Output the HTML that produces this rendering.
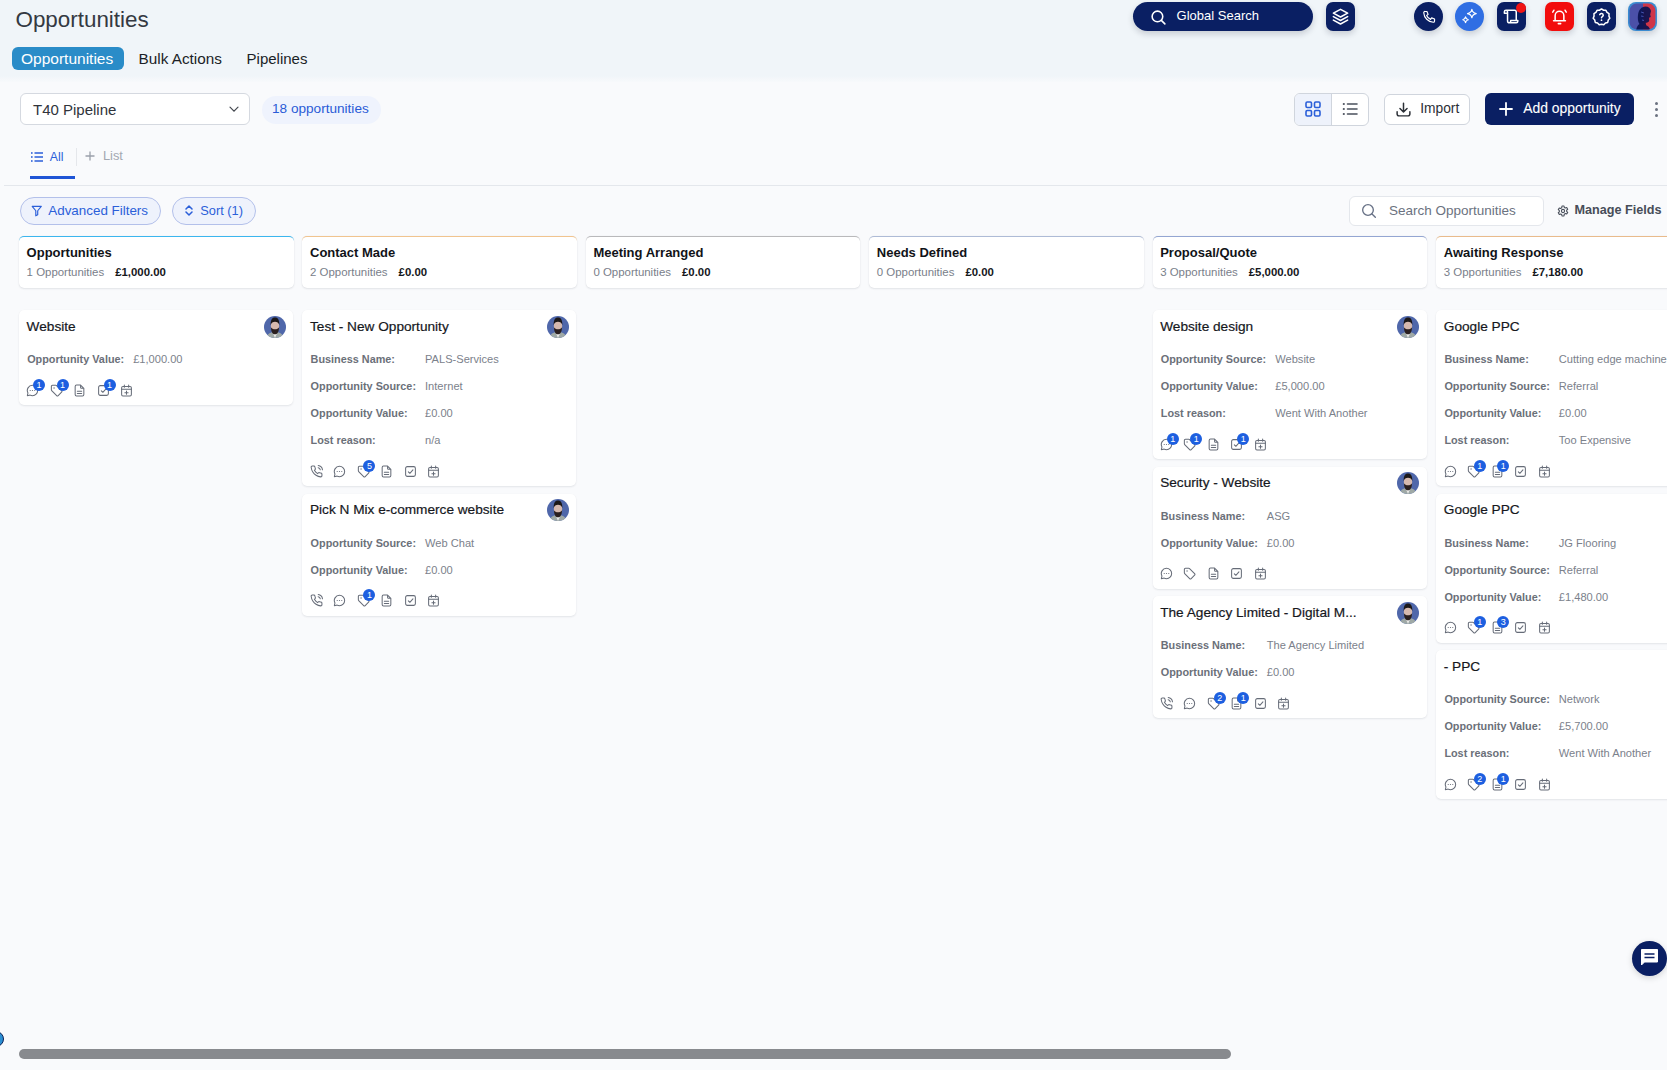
<!DOCTYPE html><html><head><meta charset="utf-8"><title>Opportunities</title><style>
*{box-sizing:border-box;margin:0;padding:0}
html,body{width:1667px;height:1070px;overflow:hidden}
body{background:#f9fafc;font-family:"Liberation Sans", sans-serif;position:relative}
.t{position:absolute;white-space:nowrap}
.abs{position:absolute}
.hdr{position:absolute;left:0;top:0;width:1667px;height:82px;background:linear-gradient(#f0f5f9 0,#f0f5f9 76px,#f9fafc 83px)}
.nav{background:#0a1f63}
.sh{box-shadow:0 3px 6px rgba(15,23,42,.18)}
.colh{position:absolute;top:236px;width:274.5px;height:52px;background:#fff;border-radius:5px;border-top:1.5px solid #38bdf8;box-shadow:0 1px 2px rgba(16,24,40,.09),0 0 1px rgba(16,24,40,.10)}
.card{position:absolute;width:273px;background:#fff;border-radius:5px;box-shadow:0 1px 2px rgba(16,24,40,.09),0 0 1px rgba(16,24,40,.04)}
.ic{position:absolute;width:13px;height:13px;color:#666c78}
.bd{position:absolute;width:12px;height:12px;border-radius:50%;background:#1d5fe0;color:#fff;font-size:9px;line-height:12px;text-align:center}
</style></head><body>
<svg width="0" height="0" style="position:absolute">
<defs>
<symbol id="i-phone" viewBox="0 0 24 24"><path fill="none" stroke="currentColor" stroke-width="1.9" stroke-linecap="round" stroke-linejoin="round" d="M15.05 5A5 5 0 0 1 19 8.95M15.05 1A9 9 0 0 1 23 8.94m-1 7.98v3a2 2 0 0 1-2.18 2 19.79 19.79 0 0 1-8.63-3.07 19.5 19.5 0 0 1-6-6 19.79 19.79 0 0 1-3.07-8.67A2 2 0 0 1 4.11 2h3a2 2 0 0 1 2 1.72 12.84 12.84 0 0 0 .7 2.81 2 2 0 0 1-.45 2.11L8.09 9.91a16 16 0 0 0 6 6l1.27-1.27a2 2 0 0 1 2.11-.45 12.84 12.84 0 0 0 2.81.7A2 2 0 0 1 22 16.92z"/></symbol>
<symbol id="i-chat" viewBox="0 0 24 24"><path fill="none" stroke="currentColor" stroke-width="1.9" stroke-linecap="round" stroke-linejoin="round" d="M12 2.5a9.5 9.5 0 0 1 0 19 9.4 9.4 0 0 1-4.3-1L2.5 21.5l1.1-4.9A9.5 9.5 0 0 1 12 2.5z"/><circle cx="7.8" cy="12" r="1.1" fill="currentColor"/><circle cx="12" cy="12" r="1.1" fill="currentColor"/><circle cx="16.2" cy="12" r="1.1" fill="currentColor"/></symbol>
<symbol id="i-tag" viewBox="0 0 24 24"><path fill="none" stroke="currentColor" stroke-width="1.9" stroke-linecap="round" stroke-linejoin="round" d="M2.5 4.5a2 2 0 0 1 2-2h6.2a2 2 0 0 1 1.4.6l9.3 9.3a2 2 0 0 1 0 2.8l-6.3 6.3a2 2 0 0 1-2.8 0L3.1 12.1a2 2 0 0 1-.6-1.4z"/><circle cx="7.5" cy="7.5" r="1.3" fill="currentColor"/></symbol>
<symbol id="i-doc" viewBox="0 0 24 24"><path fill="none" stroke="currentColor" stroke-width="1.9" stroke-linecap="round" stroke-linejoin="round" d="M14 2H6.5a2.5 2.5 0 0 0-2.5 2.5v15A2.5 2.5 0 0 0 6.5 22h11a2.5 2.5 0 0 0 2.5-2.5V8zM14 2v4.5A1.5 1.5 0 0 0 15.5 8H20M8 13.5h8M8 17.5h8"/></symbol>
<symbol id="i-check" viewBox="0 0 24 24"><rect x="3" y="3" width="18" height="18" rx="3" fill="none" stroke="currentColor" stroke-width="1.9"/><path fill="none" stroke="currentColor" stroke-width="1.9" stroke-linecap="round" stroke-linejoin="round" d="M8 12.5l2.8 2.8L16.5 9"/></symbol>
<symbol id="i-cal" viewBox="0 0 24 24"><rect x="3" y="4.5" width="18" height="17.5" rx="2.5" fill="none" stroke="currentColor" stroke-width="1.9"/><path fill="none" stroke="currentColor" stroke-width="1.9" stroke-linecap="round" d="M8 2v4M16 2v4M3 9.5h18M12 13v6M9 16h6"/></symbol>
<symbol id="i-avatar" viewBox="0 0 22 22"><clipPath id="avcl"><circle cx="11" cy="11" r="11"/></clipPath><g clip-path="url(#avcl)"><rect width="22" height="22" fill="#4f67aa"/><path d="M2.5 22c.8-3.5 2.5-5.2 5.5-5.8h6c3 .6 4.7 2.3 5.5 5.8z" fill="#9fa9a6"/><path d="M8.6 16.2h4.8L11 22z" fill="#ecebea"/><ellipse cx="11" cy="10" rx="4.2" ry="5.6" fill="#d6b9ae"/><path d="M6.6 9C6.6 3.2 8.6 1.6 11 1.6s4.4 1.6 4.4 7.4c-.8-2.2-2.3-3.2-4.4-3.2S7.4 6.8 6.6 9z" fill="#1c1818"/><path d="M6.9 11.2c.2 5.2 2 7 4.1 7s3.9-1.8 4.1-7c-.9 1.4-2.3 2-4.1 2s-3.2-.6-4.1-2z" fill="#2a1f1f"/></g></symbol>
</defs>
</svg>
<div class="hdr"></div>
<div class="t" id="h1" style="left:15.5px;top:9.24px;font-size:22.4px;line-height:22.4px;color:#343942;font-weight:400;">Opportunities</div>
<div class="abs" style="left:12px;top:47px;width:112px;height:23px;border-radius:6px;background:#2a8cc8"></div>
<div class="t" id="tab1" style="left:21px;top:50.58px;font-size:15.5px;line-height:15.5px;color:#ffffff;font-weight:400;">Opportunities</div>
<div class="t" id="tab2" style="left:138.6px;top:50.85px;font-size:15.3px;line-height:15.3px;color:#1b1f27;font-weight:400;">Bulk Actions</div>
<div class="t" id="tab3" style="left:246.6px;top:51.10px;font-size:15.0px;line-height:15.0px;color:#1b1f27;font-weight:400;">Pipelines</div>
<div class="abs nav sh" style="left:1133px;top:2px;width:180px;height:29px;border-radius:15px"></div>
<svg class="abs" style="left:1150px;top:8.5px" width="17" height="17" viewBox="0 0 24 24"><circle cx="10.5" cy="10.5" r="7.5" fill="none" stroke="#fff" stroke-width="2.2"/><path d="M16 16l5 5" stroke="#fff" stroke-width="2.2" stroke-linecap="round"/></svg>
<div class="t" id="gs" style="left:1176.6px;top:9.30px;font-size:13px;line-height:13px;color:#ffffff;font-weight:400;">Global Search</div>
<div class="abs nav sh" style="left:1326px;top:2px;width:29px;height:29px;border-radius:7px"></div>
<svg class="abs" style="left:1331px;top:7px" width="19" height="19" viewBox="0 0 24 24"><path fill="none" stroke="#fff" stroke-width="2" stroke-linejoin="round" d="M12 3l9 4.8-9 4.8-9-4.8z"/><path fill="none" stroke="#fff" stroke-width="2" stroke-linejoin="round" stroke-linecap="round" d="M3 12.2l9 4.8 9-4.8M3 16.6l9 4.8 9-4.8"/></svg>
<div class="abs nav sh" style="left:1414px;top:2px;width:29px;height:29px;border-radius:50%"></div>
<svg class="abs" style="left:1421.5px;top:9.5px" width="14" height="14" viewBox="0 0 24 24"><path fill="none" stroke="#fff" stroke-width="2" stroke-linejoin="round" d="M5 2.5h3.5l2 5-2.5 1.8a12 12 0 0 0 6.7 6.7l1.8-2.5 5 2v3.5a2 2 0 0 1-2.2 2A17.5 17.5 0 0 1 3 4.7a2 2 0 0 1 2-2.2z"/></svg>
<div class="abs sh" style="left:1455px;top:2px;width:29px;height:29px;border-radius:50%;background:#2f6ee3"></div>
<svg class="abs" style="left:1460px;top:7px" width="19" height="19" viewBox="0 0 24 24"><path fill="none" stroke="#fff" stroke-width="1.5" stroke-linejoin="round" d="M15 3c.6 3.2 2 4.6 5.5 5.3-3.5.7-4.9 2.1-5.5 5.3-.6-3.2-2-4.6-5.5-5.3 3.5-.7 4.9-2.1 5.5-5.3zM7 12.5c.4 2.2 1.3 3.1 3.5 3.6-2.2.5-3.1 1.4-3.5 3.6-.4-2.2-1.3-3.1-3.5-3.6 2.2-.5 3.1-1.4 3.5-3.6z"/></svg>
<div class="abs nav sh" style="left:1497px;top:2px;width:29px;height:29px;border-radius:7px"></div>
<svg class="abs" style="left:1502px;top:7px" width="19" height="19" viewBox="0 0 24 24"><path fill="none" stroke="#fff" stroke-width="1.9" stroke-linejoin="round" stroke-linecap="round" d="M8 20h10a2 2 0 0 0 2-2v-1h-9v1a2 2 0 0 1-4 0V6a2 2 0 0 0-2-2 2 2 0 0 0-2 2v2h4M5 4h11a2 2 0 0 1 2 2v11"/></svg>
<div class="abs" style="left:1515.7px;top:2.7px;width:10px;height:10px;border-radius:50%;background:#f01414"></div>
<div class="abs sh" style="left:1545px;top:2px;width:29px;height:29px;border-radius:7px;background:#f20d0d"></div>
<svg class="abs" style="left:1550px;top:7px" width="19" height="19" viewBox="0 0 24 24"><path fill="none" stroke="#fff" stroke-width="1.9" stroke-linejoin="round" stroke-linecap="round" d="M6.5 17V11a5.5 5.5 0 0 1 11 0v6M4.5 17.5h15M10.5 21h3M3.5 6.5L5 4M20.5 6.5L19 4"/></svg>
<div class="abs nav sh" style="left:1587px;top:2px;width:29px;height:29px;border-radius:7px"></div>
<svg class="abs" style="left:1592px;top:7px" width="19" height="19" viewBox="0 0 24 24"><path fill="none" stroke="#fff" stroke-width="1.9" stroke-linejoin="round" d="M12 2.5l2.6 1.6 3 .1 1.4 2.7 2.5 1.6-.1 3 1.1 2.8-2 2.2-.6 3-2.9.8-2.1 2.2-2.9-.8-2.9.8-2.1-2.2-2.9-.8-.6-3-2-2.2 1.1-2.8-.1-3 2.5-1.6L6.4 4.2l3-.1z"/><path fill="none" stroke="#fff" stroke-width="1.9" stroke-linecap="round" d="M9.8 9.6a2.3 2.3 0 0 1 4.4.8c0 1.5-2.2 1.9-2.2 3.2"/><circle cx="12" cy="16.6" r="1.1" fill="#fff"/></svg>
<div class="abs sh" style="left:1628px;top:2px;width:29px;height:29px;border-radius:8px;overflow:hidden;background:#3b8bd0">
<svg width="29" height="29" viewBox="0 0 29 29" style="position:absolute;left:0;top:0"><defs><clipPath id="avc"><rect x="1.6" y="1.6" width="25.8" height="25.8" rx="7"/></clipPath></defs><g clip-path="url(#avc)"><rect x="0" y="0" width="15" height="29" fill="#4b50a8"/><rect x="15" y="0" width="14" height="29" fill="#cf3548"/><path d="M8 29c.5-4 2-6 3.5-7-1.5-2-2-5-1.5-9 .6-5 3.5-8.5 7.5-8.5 3 0 5 2 5.5 4.5l-.8 3.5.6 2.5-1.8.8.2 3c-.5 1.5-2 2-3.5 2l.5 2.5c2 .8 3.5 2.3 4.5 5.7z" fill="#0a1250" opacity=".92"/><path d="M13 10l3 1M13 14l2.5.5M14 18l2 .5" stroke="#5a6ad0" stroke-width="1" opacity=".7"/></g></svg></div>
<div class="abs" style="left:20px;top:93px;width:230px;height:32px;background:#fff;border:1px solid #d5d9e0;border-radius:6px"></div>
<div class="t" id="sel" style="left:33px;top:101.80px;font-size:15px;line-height:15px;color:#30343b;font-weight:400;">T40 Pipeline</div>
<svg class="abs" style="left:228.5px;top:104px" width="10" height="10" viewBox="0 0 10 10"><path d="M1 3.2l4 4 4-4" fill="none" stroke="#44484f" stroke-width="1.2" stroke-linecap="round" stroke-linejoin="miter"/></svg>
<div class="abs" style="left:261.5px;top:95.5px;width:119.5px;height:28px;background:#eff3fd;border-radius:14px"></div>
<div class="t" id="badge" style="left:272px;top:102.29px;font-size:13.6px;line-height:13.6px;color:#2a5bd7;font-weight:400;">18 opportunities</div>
<div class="abs" style="left:1294px;top:92.5px;width:75px;height:33px;background:#fff;border:1px solid #d0d5dd;border-radius:6px;overflow:hidden"><div style="position:absolute;left:0;top:0;width:37px;height:31px;background:#eef2fb;border-right:1px solid #d0d5dd"></div></div>
<svg class="abs" style="left:1305px;top:101px" width="16" height="16" viewBox="0 0 16 16"><g fill="none" stroke="#2b5fd9" stroke-width="1.6"><rect x="1" y="1" width="5.5" height="5.5" rx="1.2"/><rect x="9.5" y="1" width="5.5" height="5.5" rx="1.2"/><rect x="1" y="9.5" width="5.5" height="5.5" rx="1.2"/><rect x="9.5" y="9.5" width="5.5" height="5.5" rx="1.2"/></g></svg>
<svg class="abs" style="left:1342px;top:101px" width="16" height="16" viewBox="0 0 16 16"><g stroke="#4a505c" stroke-width="1.6" stroke-linecap="round"><path d="M5.5 3h9.5M5.5 8h9.5M5.5 13h9.5"/></g><g fill="#4a505c"><circle cx="1.8" cy="3" r="1.1"/><circle cx="1.8" cy="8" r="1.1"/><circle cx="1.8" cy="13" r="1.1"/></g></svg>
<div class="abs" style="left:1384px;top:93.5px;width:86px;height:31px;background:#fff;border:1px solid #d0d5dd;border-radius:6px"></div>
<svg class="abs" style="left:1394.5px;top:100.5px" width="17" height="17" viewBox="0 0 24 24"><path fill="none" stroke="#2b2f36" stroke-width="2.1" stroke-linecap="round" stroke-linejoin="round" d="M3 15v3.5A2.5 2.5 0 0 0 5.5 21h13a2.5 2.5 0 0 0 2.5-2.5V15M12 3v12M7 10.5l5 5 5-5"/></svg>
<div class="t" id="imp" style="left:1420.2px;top:101.82px;font-size:13.8px;line-height:13.8px;color:#2b2f36;font-weight:400;">Import</div>
<div class="abs nav" style="left:1485px;top:93px;width:149px;height:31.5px;border-radius:6px"></div>
<svg class="abs" style="left:1499px;top:102px" width="14" height="14" viewBox="0 0 14 14"><path d="M7 1v12M1 7h12" stroke="#fff" stroke-width="1.8" stroke-linecap="round"/></svg>
<div class="t" id="add" style="left:1523.3px;top:101.53px;font-size:13.9px;line-height:13.9px;color:#ffffff;font-weight:400;-webkit-text-stroke:0.1px #fff">Add opportunity</div>
<div class="abs" style="left:1655px;top:101.5px;width:3px;height:3px;border-radius:50%;background:#6b7280"></div><div class="abs" style="left:1655px;top:107.5px;width:3px;height:3px;border-radius:50%;background:#6b7280"></div><div class="abs" style="left:1655px;top:113.5px;width:3px;height:3px;border-radius:50%;background:#6b7280"></div>
<svg class="abs" style="left:31px;top:151.5px" width="12" height="10" viewBox="0 0 12 10"><g fill="#2b5fd9"><rect x="0" y="0.2" width="1.6" height="1.6"/><rect x="0" y="4.2" width="1.6" height="1.6"/><rect x="0" y="8.2" width="1.6" height="1.6"/></g><g stroke="#2b5fd9" stroke-width="1.4"><path d="M3.5 1h8.5M3.5 5h8.5M3.5 9h8.5"/></g></svg>
<div class="t" id="all" style="left:49.8px;top:150.89px;font-size:12.3px;line-height:12.3px;color:#2b5fd9;font-weight:400;">All</div>
<div class="abs" style="left:76px;top:148px;width:1px;height:18px;background:#e5e7eb"></div>
<svg class="abs" style="left:85px;top:151px" width="10" height="10" viewBox="0 0 10 10"><path d="M5 0.5v9M0.5 5h9" stroke="#9aa0aa" stroke-width="1.3"/></svg>
<div class="t" id="list" style="left:103px;top:150.46px;font-size:12.8px;line-height:12.8px;color:#a3a8b1;font-weight:400;">List</div>
<div class="abs" style="left:30px;top:176px;width:45px;height:3px;background:#1f55d6"></div>
<div class="abs" style="left:4px;top:185px;width:1663px;height:1px;background:#e4e7ec"></div>
<div class="abs" style="left:20px;top:197px;width:141px;height:28px;border:1px solid #b3c0ea;border-radius:14px;background:#eef2fc"></div>
<svg class="abs" style="left:31px;top:205px" width="11.5" height="11.5" viewBox="0 0 24 24"><path fill="none" stroke="#2b5fd9" stroke-width="2.4" stroke-linejoin="round" d="M2.5 3h19l-7.5 9v8.5l-4 2V12z"/></svg>
<div class="t" id="af" style="left:48.3px;top:204.36px;font-size:13.4px;line-height:13.4px;color:#2b5fd9;font-weight:400;">Advanced Filters</div>
<div class="abs" style="left:172px;top:197px;width:84px;height:28px;border:1px solid #b3c0ea;border-radius:14px;background:#eef2fc"></div>
<svg class="abs" style="left:184.5px;top:205px" width="8" height="11" viewBox="0 0 8 11"><path d="M1 4l3-3 3 3M1 7l3 3 3-3" fill="none" stroke="#2b5fd9" stroke-width="1.5" stroke-linecap="round" stroke-linejoin="round"/></svg>
<div class="t" id="sort" style="left:200.3px;top:204.86px;font-size:12.8px;line-height:12.8px;color:#2b5fd9;font-weight:400;">Sort (1)</div>
<div class="abs" style="left:1349px;top:196px;width:195px;height:30px;background:#fff;border:1px solid #e4e7ec;border-radius:6px"></div>
<svg class="abs" style="left:1361px;top:203px" width="16" height="16" viewBox="0 0 24 24"><circle cx="10.5" cy="10.5" r="8" fill="none" stroke="#667085" stroke-width="2"/><path d="M16.5 16.5l5 5" stroke="#667085" stroke-width="2" stroke-linecap="round"/></svg>
<div class="t" id="so" style="left:1389px;top:203.57px;font-size:13.5px;line-height:13.5px;color:#6b7280;font-weight:400;">Search Opportunities</div>
<svg class="abs" style="left:1556.5px;top:204.5px" width="12" height="12" viewBox="0 0 24 24"><path fill="none" stroke="#4a505c" stroke-width="2.2" stroke-linejoin="round" d="M10 2h4l.6 2.8 2.1 1.2 2.7-.9 2 3.4-2.1 1.9v2.4l2.1 1.9-2 3.4-2.7-.9-2.1 1.2L14 22h-4l-.6-2.8-2.1-1.2-2.7.9-2-3.4 2.1-1.9V11.2L2.6 9.3l2-3.4 2.7.9 2.1-1.2z"/><circle cx="12" cy="12" r="3.2" fill="none" stroke="#4a505c" stroke-width="2.2"/></svg>
<div class="t" id="mf" style="left:1574.4px;top:204.29px;font-size:12.65px;line-height:12.65px;color:#474d58;font-weight:700;">Manage Fields</div>
<div class="colh" style="left:19px;border-top-color:#3cb6ee"></div>
<div class="t" id="ch0" style="left:26.6px;top:245.80px;font-size:13px;line-height:13px;color:#111318;font-weight:700;">Opportunities</div>
<div class="t" style="left:26.6px;top:266.71px;font-size:11.45px;line-height:11.45px;color:#7a808a"><span id="cs0">1 Opportunities</span><span style="margin-left:11px;color:#15171c;font-weight:700;font-size:11.4px">£1,000.00</span></div>
<div class="colh" style="left:302.4px;border-top-color:#f1c48f"></div>
<div class="t" id="ch1" style="left:310.0px;top:245.80px;font-size:13px;line-height:13px;color:#111318;font-weight:700;">Contact Made</div>
<div class="t" style="left:310.0px;top:266.71px;font-size:11.45px;line-height:11.45px;color:#7a808a"><span id="cs1">2 Opportunities</span><span style="margin-left:11px;color:#15171c;font-weight:700;font-size:11.4px">£0.00</span></div>
<div class="colh" style="left:585.8px;border-top-color:#b9b9bb"></div>
<div class="t" id="ch2" style="left:593.4px;top:245.80px;font-size:13px;line-height:13px;color:#111318;font-weight:700;">Meeting Arranged</div>
<div class="t" style="left:593.4px;top:266.71px;font-size:11.45px;line-height:11.45px;color:#7a808a"><span id="cs2">0 Opportunities</span><span style="margin-left:11px;color:#15171c;font-weight:700;font-size:11.4px">£0.00</span></div>
<div class="colh" style="left:869.2px;border-top-color:#aebbd6"></div>
<div class="t" id="ch3" style="left:876.8000000000001px;top:245.80px;font-size:13px;line-height:13px;color:#111318;font-weight:700;">Needs Defined</div>
<div class="t" style="left:876.8000000000001px;top:266.71px;font-size:11.45px;line-height:11.45px;color:#7a808a"><span id="cs3">0 Opportunities</span><span style="margin-left:11px;color:#15171c;font-weight:700;font-size:11.4px">£0.00</span></div>
<div class="colh" style="left:1152.6px;border-top-color:#94a6d2"></div>
<div class="t" id="ch4" style="left:1160.1999999999998px;top:245.80px;font-size:13px;line-height:13px;color:#111318;font-weight:700;">Proposal/Quote</div>
<div class="t" style="left:1160.1999999999998px;top:266.71px;font-size:11.45px;line-height:11.45px;color:#7a808a"><span id="cs4">3 Opportunities</span><span style="margin-left:11px;color:#15171c;font-weight:700;font-size:11.4px">£5,000.00</span></div>
<div class="colh" style="left:1436.2px;border-top-color:#e9bb8c"></div>
<div class="t" id="ch5" style="left:1443.8px;top:245.80px;font-size:13px;line-height:13px;color:#111318;font-weight:700;">Awaiting Response</div>
<div class="t" style="left:1443.8px;top:266.71px;font-size:11.45px;line-height:11.45px;color:#7a808a"><span id="cs5">3 Opportunities</span><span style="margin-left:11px;color:#15171c;font-weight:700;font-size:11.4px">£7,180.00</span></div>
<div class="card" style="left:19px;top:310px;width:274px;height:95px"><div class="t" id="cta" style="left:7.6px;top:9.95px;font-size:13.65px;line-height:13.65px;color:#16181d;font-weight:400;-webkit-text-stroke:0.2px #16181d">Website</div><svg class="abs" style="left:244.5px;top:5.8px" width="22" height="22"><use href="#i-avatar"/></svg><div class="abs" style="left:8.2px;top:36.42px;display:grid;grid-template-columns:auto auto;column-gap:9px;row-gap:0"><div style="font-size:10.85px;font-weight:700;color:#6b7079;height:27px;line-height:27px;white-space:nowrap">Opportunity Value:</div><div style="font-size:11.1px;color:#7b818b;height:27px;line-height:27px;white-space:nowrap">£1,000.00</div></div><svg class="ic" style="left:7.40px;top:73.50px"><use href="#i-chat"/></svg><div class="bd" style="left:14.10px;top:68.80px">1</div><svg class="ic" style="left:30.90px;top:73.50px"><use href="#i-tag"/></svg><div class="bd" style="left:37.60px;top:68.80px">1</div><svg class="ic" style="left:54.40px;top:73.50px"><use href="#i-doc"/></svg><svg class="ic" style="left:77.90px;top:73.50px"><use href="#i-check"/></svg><div class="bd" style="left:84.60px;top:68.80px">1</div><svg class="ic" style="left:101.40px;top:73.50px"><use href="#i-cal"/></svg></div>
<div class="card" style="left:302.4px;top:310px;width:274px;height:176px"><div class="t" id="ctb" style="left:7.6px;top:9.95px;font-size:13.65px;line-height:13.65px;color:#16181d;font-weight:400;-webkit-text-stroke:0.2px #16181d">Test - New Opportunity</div><svg class="abs" style="left:244.5px;top:5.8px" width="22" height="22"><use href="#i-avatar"/></svg><div class="abs" style="left:8.2px;top:36.42px;display:grid;grid-template-columns:auto auto;column-gap:9px;row-gap:0"><div style="font-size:10.85px;font-weight:700;color:#6b7079;height:27px;line-height:27px;white-space:nowrap">Business Name:</div><div style="font-size:11.1px;color:#7b818b;height:27px;line-height:27px;white-space:nowrap">PALS-Services</div><div style="font-size:10.85px;font-weight:700;color:#6b7079;height:27px;line-height:27px;white-space:nowrap">Opportunity Source:</div><div style="font-size:11.1px;color:#7b818b;height:27px;line-height:27px;white-space:nowrap">Internet</div><div style="font-size:10.85px;font-weight:700;color:#6b7079;height:27px;line-height:27px;white-space:nowrap">Opportunity Value:</div><div style="font-size:11.1px;color:#7b818b;height:27px;line-height:27px;white-space:nowrap">£0.00</div><div style="font-size:10.85px;font-weight:700;color:#6b7079;height:27px;line-height:27px;white-space:nowrap">Lost reason:</div><div style="font-size:11.1px;color:#7b818b;height:27px;line-height:27px;white-space:nowrap">n/a</div></div><svg class="ic" style="left:7.40px;top:154.50px"><use href="#i-phone"/></svg><svg class="ic" style="left:30.90px;top:154.50px"><use href="#i-chat"/></svg><svg class="ic" style="left:54.40px;top:154.50px"><use href="#i-tag"/></svg><div class="bd" style="left:61.10px;top:149.80px">5</div><svg class="ic" style="left:77.90px;top:154.50px"><use href="#i-doc"/></svg><svg class="ic" style="left:101.40px;top:154.50px"><use href="#i-check"/></svg><svg class="ic" style="left:124.90px;top:154.50px"><use href="#i-cal"/></svg></div>
<div class="card" style="left:302.4px;top:493.5px;width:274px;height:122px"><div class="t" id="ctc" style="left:7.6px;top:9.95px;font-size:13.65px;line-height:13.65px;color:#16181d;font-weight:400;-webkit-text-stroke:0.2px #16181d">Pick N Mix e-commerce website</div><svg class="abs" style="left:244.5px;top:5.8px" width="22" height="22"><use href="#i-avatar"/></svg><div class="abs" style="left:8.2px;top:36.42px;display:grid;grid-template-columns:auto auto;column-gap:9px;row-gap:0"><div style="font-size:10.85px;font-weight:700;color:#6b7079;height:27px;line-height:27px;white-space:nowrap">Opportunity Source:</div><div style="font-size:11.1px;color:#7b818b;height:27px;line-height:27px;white-space:nowrap">Web Chat</div><div style="font-size:10.85px;font-weight:700;color:#6b7079;height:27px;line-height:27px;white-space:nowrap">Opportunity Value:</div><div style="font-size:11.1px;color:#7b818b;height:27px;line-height:27px;white-space:nowrap">£0.00</div></div><svg class="ic" style="left:7.40px;top:100.50px"><use href="#i-phone"/></svg><svg class="ic" style="left:30.90px;top:100.50px"><use href="#i-chat"/></svg><svg class="ic" style="left:54.40px;top:100.50px"><use href="#i-tag"/></svg><div class="bd" style="left:61.10px;top:95.80px">1</div><svg class="ic" style="left:77.90px;top:100.50px"><use href="#i-doc"/></svg><svg class="ic" style="left:101.40px;top:100.50px"><use href="#i-check"/></svg><svg class="ic" style="left:124.90px;top:100.50px"><use href="#i-cal"/></svg></div>
<div class="card" style="left:1152.6px;top:310px;width:274px;height:149px"><div class="t" id="ctd" style="left:7.6px;top:9.95px;font-size:13.65px;line-height:13.65px;color:#16181d;font-weight:400;-webkit-text-stroke:0.2px #16181d">Website design</div><svg class="abs" style="left:244.5px;top:5.8px" width="22" height="22"><use href="#i-avatar"/></svg><div class="abs" style="left:8.2px;top:36.42px;display:grid;grid-template-columns:auto auto;column-gap:9px;row-gap:0"><div style="font-size:10.85px;font-weight:700;color:#6b7079;height:27px;line-height:27px;white-space:nowrap">Opportunity Source:</div><div style="font-size:11.1px;color:#7b818b;height:27px;line-height:27px;white-space:nowrap">Website</div><div style="font-size:10.85px;font-weight:700;color:#6b7079;height:27px;line-height:27px;white-space:nowrap">Opportunity Value:</div><div style="font-size:11.1px;color:#7b818b;height:27px;line-height:27px;white-space:nowrap">£5,000.00</div><div style="font-size:10.85px;font-weight:700;color:#6b7079;height:27px;line-height:27px;white-space:nowrap">Lost reason:</div><div style="font-size:11.1px;color:#7b818b;height:27px;line-height:27px;white-space:nowrap">Went With Another</div></div><svg class="ic" style="left:7.40px;top:127.50px"><use href="#i-chat"/></svg><div class="bd" style="left:14.10px;top:122.80px">1</div><svg class="ic" style="left:30.90px;top:127.50px"><use href="#i-tag"/></svg><div class="bd" style="left:37.60px;top:122.80px">1</div><svg class="ic" style="left:54.40px;top:127.50px"><use href="#i-doc"/></svg><svg class="ic" style="left:77.90px;top:127.50px"><use href="#i-check"/></svg><div class="bd" style="left:84.60px;top:122.80px">1</div><svg class="ic" style="left:101.40px;top:127.50px"><use href="#i-cal"/></svg></div>
<div class="card" style="left:1152.6px;top:466.5px;width:274px;height:122px"><div class="t" id="cte" style="left:7.6px;top:9.95px;font-size:13.65px;line-height:13.65px;color:#16181d;font-weight:400;-webkit-text-stroke:0.2px #16181d">Security - Website</div><svg class="abs" style="left:244.5px;top:5.8px" width="22" height="22"><use href="#i-avatar"/></svg><div class="abs" style="left:8.2px;top:36.42px;display:grid;grid-template-columns:auto auto;column-gap:9px;row-gap:0"><div style="font-size:10.85px;font-weight:700;color:#6b7079;height:27px;line-height:27px;white-space:nowrap">Business Name:</div><div style="font-size:11.1px;color:#7b818b;height:27px;line-height:27px;white-space:nowrap">ASG</div><div style="font-size:10.85px;font-weight:700;color:#6b7079;height:27px;line-height:27px;white-space:nowrap">Opportunity Value:</div><div style="font-size:11.1px;color:#7b818b;height:27px;line-height:27px;white-space:nowrap">£0.00</div></div><svg class="ic" style="left:7.40px;top:100.50px"><use href="#i-chat"/></svg><svg class="ic" style="left:30.90px;top:100.50px"><use href="#i-tag"/></svg><svg class="ic" style="left:54.40px;top:100.50px"><use href="#i-doc"/></svg><svg class="ic" style="left:77.90px;top:100.50px"><use href="#i-check"/></svg><svg class="ic" style="left:101.40px;top:100.50px"><use href="#i-cal"/></svg></div>
<div class="card" style="left:1152.6px;top:596px;width:274px;height:122px"><div class="t" id="ctf" style="left:7.6px;top:9.95px;font-size:13.65px;line-height:13.65px;color:#16181d;font-weight:400;-webkit-text-stroke:0.2px #16181d">The Agency Limited - Digital M...</div><svg class="abs" style="left:244.5px;top:5.8px" width="22" height="22"><use href="#i-avatar"/></svg><div class="abs" style="left:8.2px;top:36.42px;display:grid;grid-template-columns:auto auto;column-gap:9px;row-gap:0"><div style="font-size:10.85px;font-weight:700;color:#6b7079;height:27px;line-height:27px;white-space:nowrap">Business Name:</div><div style="font-size:11.1px;color:#7b818b;height:27px;line-height:27px;white-space:nowrap">The Agency Limited</div><div style="font-size:10.85px;font-weight:700;color:#6b7079;height:27px;line-height:27px;white-space:nowrap">Opportunity Value:</div><div style="font-size:11.1px;color:#7b818b;height:27px;line-height:27px;white-space:nowrap">£0.00</div></div><svg class="ic" style="left:7.40px;top:100.50px"><use href="#i-phone"/></svg><svg class="ic" style="left:30.90px;top:100.50px"><use href="#i-chat"/></svg><svg class="ic" style="left:54.40px;top:100.50px"><use href="#i-tag"/></svg><div class="bd" style="left:61.10px;top:95.80px">2</div><svg class="ic" style="left:77.90px;top:100.50px"><use href="#i-doc"/></svg><div class="bd" style="left:84.60px;top:95.80px">1</div><svg class="ic" style="left:101.40px;top:100.50px"><use href="#i-check"/></svg><svg class="ic" style="left:124.90px;top:100.50px"><use href="#i-cal"/></svg></div>
<div class="card" style="left:1436.2px;top:310px;width:274px;height:176px"><div class="t" id="ctg" style="left:7.6px;top:9.95px;font-size:13.65px;line-height:13.65px;color:#16181d;font-weight:400;-webkit-text-stroke:0.2px #16181d">Google PPC</div><svg class="abs" style="left:244.5px;top:5.8px" width="22" height="22"><use href="#i-avatar"/></svg><div class="abs" style="left:8.2px;top:36.42px;display:grid;grid-template-columns:auto auto;column-gap:9px;row-gap:0"><div style="font-size:10.85px;font-weight:700;color:#6b7079;height:27px;line-height:27px;white-space:nowrap">Business Name:</div><div style="font-size:11.1px;color:#7b818b;height:27px;line-height:27px;white-space:nowrap">Cutting edge machinery</div><div style="font-size:10.85px;font-weight:700;color:#6b7079;height:27px;line-height:27px;white-space:nowrap">Opportunity Source:</div><div style="font-size:11.1px;color:#7b818b;height:27px;line-height:27px;white-space:nowrap">Referral</div><div style="font-size:10.85px;font-weight:700;color:#6b7079;height:27px;line-height:27px;white-space:nowrap">Opportunity Value:</div><div style="font-size:11.1px;color:#7b818b;height:27px;line-height:27px;white-space:nowrap">£0.00</div><div style="font-size:10.85px;font-weight:700;color:#6b7079;height:27px;line-height:27px;white-space:nowrap">Lost reason:</div><div style="font-size:11.1px;color:#7b818b;height:27px;line-height:27px;white-space:nowrap">Too Expensive</div></div><svg class="ic" style="left:7.40px;top:154.50px"><use href="#i-chat"/></svg><svg class="ic" style="left:30.90px;top:154.50px"><use href="#i-tag"/></svg><div class="bd" style="left:37.60px;top:149.80px">1</div><svg class="ic" style="left:54.40px;top:154.50px"><use href="#i-doc"/></svg><div class="bd" style="left:61.10px;top:149.80px">1</div><svg class="ic" style="left:77.90px;top:154.50px"><use href="#i-check"/></svg><svg class="ic" style="left:101.40px;top:154.50px"><use href="#i-cal"/></svg></div>
<div class="card" style="left:1436.2px;top:493.5px;width:274px;height:149px"><div class="t" id="cth" style="left:7.6px;top:9.95px;font-size:13.65px;line-height:13.65px;color:#16181d;font-weight:400;-webkit-text-stroke:0.2px #16181d">Google PPC</div><svg class="abs" style="left:244.5px;top:5.8px" width="22" height="22"><use href="#i-avatar"/></svg><div class="abs" style="left:8.2px;top:36.42px;display:grid;grid-template-columns:auto auto;column-gap:9px;row-gap:0"><div style="font-size:10.85px;font-weight:700;color:#6b7079;height:27px;line-height:27px;white-space:nowrap">Business Name:</div><div style="font-size:11.1px;color:#7b818b;height:27px;line-height:27px;white-space:nowrap">JG Flooring</div><div style="font-size:10.85px;font-weight:700;color:#6b7079;height:27px;line-height:27px;white-space:nowrap">Opportunity Source:</div><div style="font-size:11.1px;color:#7b818b;height:27px;line-height:27px;white-space:nowrap">Referral</div><div style="font-size:10.85px;font-weight:700;color:#6b7079;height:27px;line-height:27px;white-space:nowrap">Opportunity Value:</div><div style="font-size:11.1px;color:#7b818b;height:27px;line-height:27px;white-space:nowrap">£1,480.00</div></div><svg class="ic" style="left:7.40px;top:127.50px"><use href="#i-chat"/></svg><svg class="ic" style="left:30.90px;top:127.50px"><use href="#i-tag"/></svg><div class="bd" style="left:37.60px;top:122.80px">1</div><svg class="ic" style="left:54.40px;top:127.50px"><use href="#i-doc"/></svg><div class="bd" style="left:61.10px;top:122.80px">3</div><svg class="ic" style="left:77.90px;top:127.50px"><use href="#i-check"/></svg><svg class="ic" style="left:101.40px;top:127.50px"><use href="#i-cal"/></svg></div>
<div class="card" style="left:1436.2px;top:650px;width:274px;height:149px"><div class="t" id="cti" style="left:7.6px;top:9.95px;font-size:13.65px;line-height:13.65px;color:#16181d;font-weight:400;-webkit-text-stroke:0.2px #16181d">- PPC</div><svg class="abs" style="left:244.5px;top:5.8px" width="22" height="22"><use href="#i-avatar"/></svg><div class="abs" style="left:8.2px;top:36.42px;display:grid;grid-template-columns:auto auto;column-gap:9px;row-gap:0"><div style="font-size:10.85px;font-weight:700;color:#6b7079;height:27px;line-height:27px;white-space:nowrap">Opportunity Source:</div><div style="font-size:11.1px;color:#7b818b;height:27px;line-height:27px;white-space:nowrap">Network</div><div style="font-size:10.85px;font-weight:700;color:#6b7079;height:27px;line-height:27px;white-space:nowrap">Opportunity Value:</div><div style="font-size:11.1px;color:#7b818b;height:27px;line-height:27px;white-space:nowrap">£5,700.00</div><div style="font-size:10.85px;font-weight:700;color:#6b7079;height:27px;line-height:27px;white-space:nowrap">Lost reason:</div><div style="font-size:11.1px;color:#7b818b;height:27px;line-height:27px;white-space:nowrap">Went With Another</div></div><svg class="ic" style="left:7.40px;top:127.50px"><use href="#i-chat"/></svg><svg class="ic" style="left:30.90px;top:127.50px"><use href="#i-tag"/></svg><div class="bd" style="left:37.60px;top:122.80px">2</div><svg class="ic" style="left:54.40px;top:127.50px"><use href="#i-doc"/></svg><div class="bd" style="left:61.10px;top:122.80px">1</div><svg class="ic" style="left:77.90px;top:127.50px"><use href="#i-check"/></svg><svg class="ic" style="left:101.40px;top:127.50px"><use href="#i-cal"/></svg></div>
<div class="abs" style="left:19px;top:1049px;width:1212px;height:10px;border-radius:5px;background:#888a8e"></div>
<div class="abs" style="left:-12px;top:1030.5px;width:16px;height:16px;border-radius:50%;background:#2b8fd3;border:1.2px solid #0b2157"></div>
<div class="abs nav" style="left:1631.5px;top:940.5px;width:35px;height:35px;border-radius:50%;box-shadow:0 2px 6px rgba(0,0,0,.15)"></div>
<svg class="abs" style="left:1639.5px;top:948px" width="19" height="19" viewBox="0 0 19 19"><path d="M1.5 1.5h16v12.5H4.5L1.5 17z" fill="#fff" stroke="#fff" stroke-width="1" stroke-linejoin="round"/><path d="M4.5 6h10M4.5 9.5h10" stroke="#0a1f63" stroke-width="1.5"/></svg></body></html>
